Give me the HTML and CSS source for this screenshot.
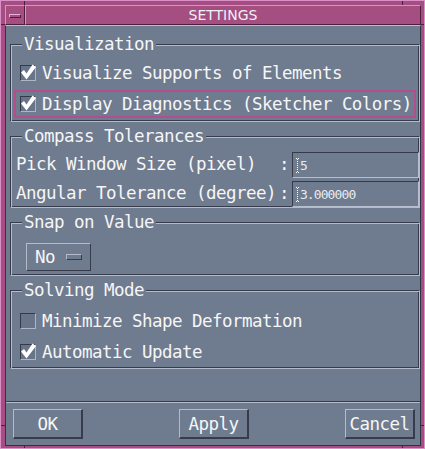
FILE: index.html
```html
<!DOCTYPE html>
<html>

<head>
    <title>Settings</title>
    <link rel="stylesheet" href="styles.css">
</head>

<body>
    <div class="window">
        <div class="titlebar">
            <div class="menu-button"><span class="menu-dash"></span></div>
            <div class="title">SETTINGS</div>
        </div>

        <div class="client">
            <fieldset class="group group-visualization">
                <legend>Visualization</legend>
                <div class="group-body body-checks">
                    <div class="check-row">
                        <span class="checkbox"><svg width="14" height="14" viewBox="0 0 14 14"><polygon points="0,6.5 3,4 5.5,7.5 11.5,-1.5 15,1 5.5,13.5" fill="#fff"/></svg></span>
                        <span>Visualize Supports of Elements</span>
                    </div>
                    <div class="check-row focused">
                        <span class="checkbox"><svg width="14" height="14" viewBox="0 0 14 14"><polygon points="0,6.5 3,4 5.5,7.5 11.5,-1.5 15,1 5.5,13.5" fill="#fff"/></svg></span>
                        <span>Display Diagnostics (Sketcher Colors)</span>
                    </div>
                </div>
            </fieldset>

            <fieldset class="group">
                <legend>Compass Tolerances</legend>
                <div class="group-body body-fields">
                    <div class="field-row">
                        <span class="field-label">Pick Window Size (pixel)</span>
                        <span class="field-colon">:</span>
                        <span class="field-input">
                            <svg class="cursor" width="3" height="15" viewBox="0 0 3 15"><path d="M0 0.5h3M0 14.5h3M1.5 1v13" stroke="#fff" stroke-width="1" stroke-dasharray="1 1"/></svg>5
                        </span>
                    </div>
                    <div class="field-row">
                        <span class="field-label">Angular Tolerance (degree)</span>
                        <span class="field-colon">:</span>
                        <span class="field-input">
                            <svg class="cursor" width="3" height="15" viewBox="0 0 3 15"><path d="M0 0.5h3M0 14.5h3M1.5 1v13" stroke="#fff" stroke-width="1" stroke-dasharray="1 1"/></svg>3.000000
                        </span>
                    </div>
                </div>
            </fieldset>

            <fieldset class="group">
                <legend>Snap on Value</legend>
                <div class="group-body body-snap">
                    <div class="option-menu">
                        <span>No</span>
                        <span class="option-indicator"></span>
                    </div>
                </div>
            </fieldset>

            <fieldset class="group">
                <legend>Solving Mode</legend>
                <div class="group-body body-solving">
                    <div class="check-row">
                        <span class="checkbox"></span>
                        <span>Minimize Shape Deformation</span>
                    </div>
                    <div class="check-row">
                        <span class="checkbox"><svg width="14" height="14" viewBox="0 0 14 14"><polygon points="0,6.5 3,4 5.5,7.5 11.5,-1.5 15,1 5.5,13.5" fill="#fff"/></svg></span>
                        <span>Automatic Update</span>
                    </div>
                </div>
            </fieldset>

            <div class="separator"></div>

            <div class="button-row">
                <button class="button">OK</button>
                <button class="button">Apply</button>
                <button class="button">Cancel</button>
            </div>
        </div>
    </div>
</body>

</html>
```

FILE: styles.css
```css
* {
    box-sizing: border-box;
}

body {
    margin: 0;
    font-family: "DejaVu Sans Mono", monospace;
    font-size: 17.5px;
    letter-spacing: -0.54px;
    color: #f6f6f6;
}

.window {
    width: 425px;
    height: 449px;
    border: 1px solid #dc90c8;
    padding: 4px 3px 2px 4px;
    /* resize corner ticks on the frame */
    background:
        linear-gradient(#4e1e3c, #4e1e3c) 23px 0 / 1px 4px no-repeat,
        linear-gradient(#4e1e3c, #4e1e3c) 401px 0 / 1px 4px no-repeat,
        linear-gradient(#4e1e3c, #4e1e3c) 23px 100% / 1px 2px no-repeat,
        linear-gradient(#4e1e3c, #4e1e3c) 401px 100% / 1px 2px no-repeat,
        linear-gradient(#4e1e3c, #4e1e3c) 0 23px / 4px 1px no-repeat,
        linear-gradient(#4e1e3c, #4e1e3c) 0 424px / 4px 1px no-repeat,
        linear-gradient(#4e1e3c, #4e1e3c) 100% 23px / 3px 1px no-repeat,
        linear-gradient(#4e1e3c, #4e1e3c) 100% 424px / 3px 1px no-repeat,
        #a44e82;
    display: flex;
    flex-direction: column;
}

.titlebar {
    display: flex;
    height: 20px;
}

.menu-button {
    width: 20px;
    border: 1px solid;
    border-color: #dc90c8 #4e1e3c #4e1e3c #dc90c8;
    display: flex;
    align-items: center;
    justify-content: center;
    padding-top: 2px;
}

.menu-dash {
    width: 12px;
    height: 4px;
    border: 1px solid;
    border-color: #e8b0dc #4e1e3c #4e1e3c #e8b0dc;
}

.title {
    flex: 1;
    border: 1px solid;
    border-color: #dc90c8 #4e1e3c #4e1e3c #dc90c8;
    text-align: center;
    font-family: "DejaVu Sans", sans-serif;
    font-size: 14px;
    letter-spacing: 0;
    line-height: 19px;
    color: #f0f0f4;
}

.client {
    height: 421px;
    border: 1px solid #2e3444;
    border-top-color: #b8c0d0;
    background: #6f7b8f;
    display: flex;
    flex-direction: column;
}

/* group frames */
.group {
    margin: 5px 0 0 4px;
    padding: 0;
    min-inline-size: 0;
    border: 1px solid;
    border-color: #363c4c #b4bccc #b4bccc #363c4c;
    box-shadow: inset 1px 1px 0 #b4bccc, inset -1px -1px 0 #363c4c;
}

.group-visualization {
    margin-top: 9px;
}

.group legend {
    margin-left: 11px;
    padding: 0 2px;
    line-height: 18px;
    background: #6f7b8f;
}

.body-checks {
    padding: 6px 3px 3px;
}

.body-solving {
    padding: 8px 3px 3px;
}

.body-fields {
    padding: 7px 0 0 5px;
}

.body-snap {
    display: flex;
    padding: 12px 0 4px 15px;
}

.check-row {
    display: flex;
    align-items: center;
    gap: 6px;
    height: 27px;
    padding-left: 6px;
}

.check-row + .check-row {
    margin-top: 4px;
}

.check-row.focused {
    height: 28px;
    border: 2px solid #b44c8e;
    padding-left: 4px;
}

.checkbox {
    width: 16px;
    height: 16px;
    border: 1px solid;
    border-color: #343a4a #aeb6c6 #aeb6c6 #343a4a;
    background: #67748a;
}

.checkbox svg {
    display: block;
    overflow: visible;
}

/* text fields */
.field-row {
    display: flex;
    align-items: center;
    height: 26px;
}

.field-row + .field-row {
    margin-top: 3px;
}

.field-label {
    width: 263px;
    padding-bottom: 3px;
}

.field-colon {
    width: 10px;
    margin-right: 3px;
    padding-bottom: 3px;
}

.field-input {
    flex: 1;
    align-self: stretch;
    display: flex;
    align-items: center;
    padding-left: 3px;
    border: 1px solid;
    border-color: #343a4a #b8c0d0 #b8c0d0 #343a4a;
    font-size: 13px;
    letter-spacing: -0.9px;
    color: #e8eaee;
}

.cursor {
    display: block;
    margin-right: 0.9px;
}

/* option menu */
.option-menu {
    display: flex;
    align-items: center;
    width: 65px;
    height: 28px;
    padding-left: 8px;
    border: 1px solid;
    border-color: #b4bccc #363c4c #363c4c #b4bccc;
}

.option-indicator {
    width: 16px;
    height: 6px;
    margin-left: 11px;
    border: 1px solid;
    border-color: #b4bccc #363c4c #363c4c #b4bccc;
}

/* bottom buttons */
.separator {
    margin-top: auto;
    height: 2px;
    border-top: 1px solid #363c4c;
    border-bottom: 1px solid #b4bccc;
}

.button-row {
    display: flex;
    justify-content: space-between;
    margin-top: 6px;
    padding: 0 5px 6px 7px;
}

.button {
    width: 70px;
    height: 30px;
    padding: 0;
    border-style: solid;
    border-width: 1px 2px 2px 1px;
    border-color: #b4bccc #363c4c #363c4c #b4bccc;
    background: transparent;
    font-family: inherit;
    font-size: inherit;
    letter-spacing: inherit;
    color: #f6f6f6;
}
```
